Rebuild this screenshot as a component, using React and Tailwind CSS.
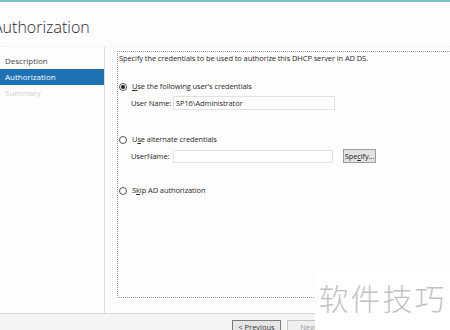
function Radio({ checked }) {
  return (
    <span className="flex h-[8px] w-[8px] shrink-0 items-center justify-center rounded-full border border-[#555] bg-white">
      {checked && <span className="h-[4px] w-[4px] rounded-full bg-[#222]" />}
    </span>
  );
}

export default function App() {
  return (
    <div className="relative h-[330px] w-[450px] overflow-hidden bg-[#fdfdfd] font-['Open_Sans',sans-serif] text-[#333]">
      {/* top accent */}
      <div className="h-[2px] bg-[#7ec0ca]" />

      {/* title */}
      <div className="h-[45px] border-b border-dotted border-[#ececec] pt-[15px]">
        <h1 className="-ml-[7px] text-[16px] font-light leading-[20px] text-[#2a2a2a]">Authorization</h1>
      </div>

      <div className="flex h-[266px]">
        {/* left nav */}
        <div className="w-[105px] border-r border-[#dcdcdc] pt-[6px] text-[8px]">
          <div className="h-[16px] pl-[5px] leading-[16px] text-[#444]">Description</div>
          <div className="h-[16px] bg-[#1e72b4] pl-[5px] leading-[16px] text-white">Authorization</div>
          <div className="h-[16px] pl-[5px] leading-[16px] text-[#cfcfcf]">Summary</div>
        </div>

        {/* content */}
        <div className="flex-1 pl-[12px] pt-[4px]">
          <div className="h-[247px] border-l border-t border-b border-dotted border-[#9a9a9a] text-[7.5px] leading-[11px] tracking-[-0.1px] text-[#2a2a2a]">
            <p className="whitespace-nowrap pl-[1px] pt-[1px]">Specify the credentials to be used to authorize this DHCP server in AD DS.</p>

            <div className="mt-[17px] flex items-center gap-[5px] pl-[1px]">
              <Radio checked />
              <span className="whitespace-nowrap"><span className="underline">U</span>se the following user's credentials</span>
            </div>
            <div className="mt-[4px] flex items-center pl-[13px]">
              <span className="w-[42px] whitespace-nowrap">User Name:</span>
              <div className="h-[14px] w-[162px] border border-[#e2e2e2] bg-white pl-[2px] leading-[12px]">SP16\Administrator</div>
            </div>

            <div className="mt-[24px] flex items-center gap-[5px] pl-[1px]">
              <Radio />
              <span className="whitespace-nowrap">U<span className="underline">s</span>e alternate credentials</span>
            </div>
            <div className="mt-[4px] flex items-center pl-[13px]">
              <span className="w-[42px] whitespace-nowrap">UserName:</span>
              <div className="h-[13px] w-[160px] border border-[#e2e2e2] bg-white" />
              <button className="ml-[10px] h-[14px] w-[33px] whitespace-nowrap border border-[#9c9c9c] bg-[#e2e2e2] text-[7.5px] leading-[12px] text-[#222]">
                Spe<span className="underline">c</span>ify...
              </button>
            </div>

            <div className="mt-[22px] flex items-center gap-[5px] pl-[1px]">
              <Radio />
              <span className="whitespace-nowrap">S<span className="underline">k</span>ip AD authorization</span>
            </div>
          </div>
        </div>
      </div>

      {/* bottom bar */}
      <div className="h-[17px] border-t border-[#d6d6d6] bg-[#f4f4f4] pt-[6px]">
        <div className="flex gap-[6px] pl-[232px]">
          <button className="h-[14px] w-[49px] whitespace-nowrap border border-[#7a7a7a] bg-[#e6e6e6] text-[7.5px] leading-[12px] text-[#333]">&lt; Previous</button>
          <button className="h-[14px] w-[49px] whitespace-nowrap border border-[#c4c4c4] bg-[#f0f0f0] text-[7.5px] leading-[12px] text-[#999]">Next &gt;</button>
        </div>
      </div>

      {/* watermark */}
      <div className="absolute bottom-0 right-0 flex h-[65px] w-[135px] items-center justify-center bg-white">
        <span className="font-['Noto_Sans_CJK_SC',sans-serif] text-[30px] font-light tracking-[2px] text-[#c2c2c2]">软件技巧</span>
      </div>
    </div>
  );
}
